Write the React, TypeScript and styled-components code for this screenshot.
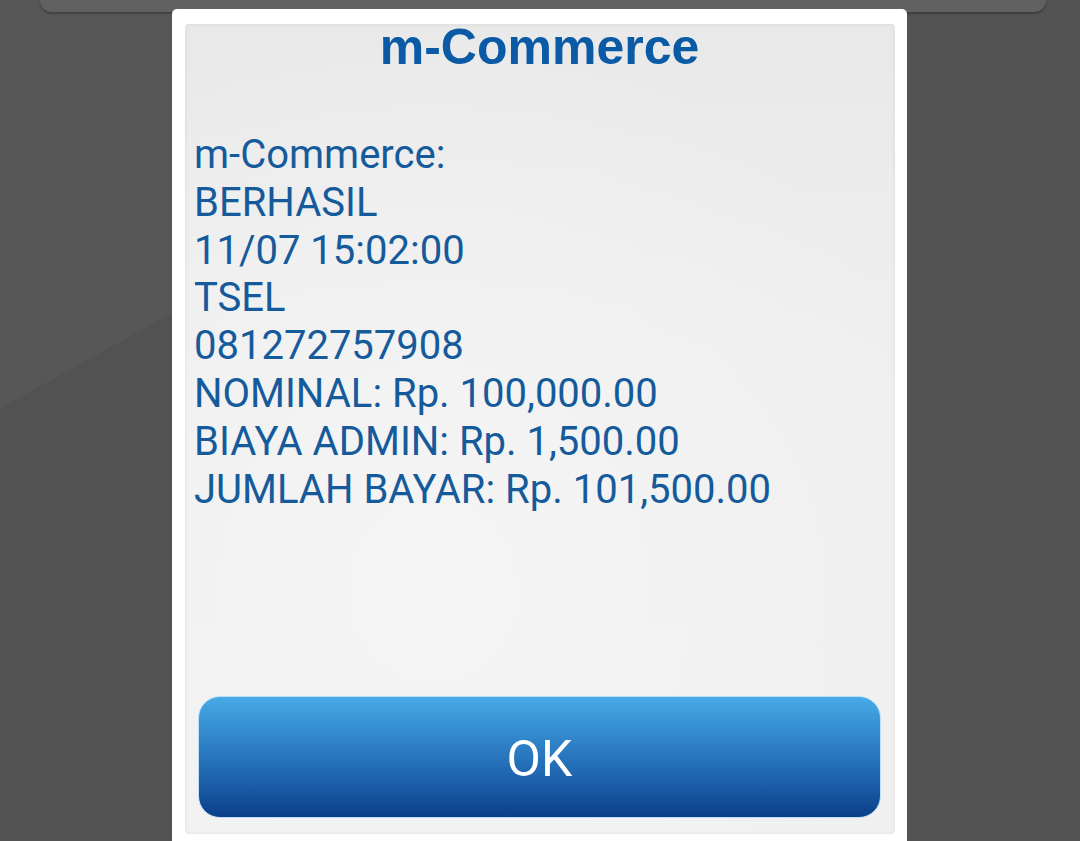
import styled, { createGlobalStyle } from "styled-components";

const GlobalStyle = createGlobalStyle`
  html, body {
    margin: 0;
    padding: 0;
    overflow: hidden;
  }
  * {
    box-sizing: border-box;
  }
`;

const Screen = styled.div`
  position: relative;
  width: 100%;
  height: 100vh;
  overflow: hidden;
  background: linear-gradient(151deg, #575757 28.3%, #525252 28.4%);
`;

const TopBar = styled.div`
  margin: 0 34px 0 40px;
  height: 12px;
  background: #616161;
  border-radius: 0 0 22px 22px;
  box-shadow: 0 2px 2px rgba(0, 0, 0, 0.25);
`;

const Dialog = styled.div`
  position: absolute;
  top: 9px;
  left: 172px;
  width: 735px;
  height: 860px;
  padding: 15px 12px 13px 13px;
  background: #ffffff;
  border-radius: 5px;
`;

const Panel = styled.div`
  display: flex;
  flex-direction: column;
  height: 810px;
  padding: 0 14px 16px 13px;
  border-radius: 4px;
  background:
    radial-gradient(ellipse 75% 70% at 35% 70%, #f5f5f5 0%, rgba(245, 245, 245, 0) 100%),
    linear-gradient(180deg, #e9e9e9 0%, #efefef 40%, #f0f0f0 100%);
  box-shadow: inset 0 0 4px rgba(0, 0, 0, 0.08);
`;

const Title = styled.h1`
  margin: 0;
  text-align: center;
  font-family: "Liberation Sans", Arial, sans-serif;
  font-weight: 700;
  font-size: 50px;
  line-height: 46px;
  color: #0b5aa5;
`;

const Body = styled.div`
  flex: 1;
  padding-top: 61px;
  margin-left: -4px;
  font-family: Roboto, "Noto Sans", sans-serif;
  font-size: 40px;
  line-height: 47.8px;
  color: #155b9c;
`;

const Line = styled.div`
  white-space: nowrap;
`;

const OkButton = styled.button`
  display: flex;
  align-items: center;
  justify-content: center;
  width: 100%;
  height: 122px;
  border: 1px solid #bcdff5;
  border-radius: 22px;
  background: linear-gradient(180deg, #47aae7 0%, #2e80c6 40%, #1a5ba6 75%, #0a3e88 100%);
  color: #ffffff;
  font-family: Roboto, "Noto Sans", sans-serif;
  font-size: 50px;
  cursor: pointer;
  padding: 4px 0 0 0;
`;

const lines = [
  "m-Commerce:",
  "BERHASIL",
  "11/07 15:02:00",
  "TSEL",
  "081272757908",
  "NOMINAL: Rp. 100,000.00",
  "BIAYA ADMIN: Rp. 1,500.00",
  "JUMLAH BAYAR: Rp. 101,500.00",
];

function App() {
  return (
    <>
      <GlobalStyle />
      <Screen>
        <TopBar />
        <Dialog>
          <Panel>
            <Title>m-Commerce</Title>
            <Body>
              {lines.map((text, index) => (
                <Line key={index}>{text}</Line>
              ))}
            </Body>
            <OkButton type="button">OK</OkButton>
          </Panel>
        </Dialog>
      </Screen>
    </>
  );
}

export default App;
